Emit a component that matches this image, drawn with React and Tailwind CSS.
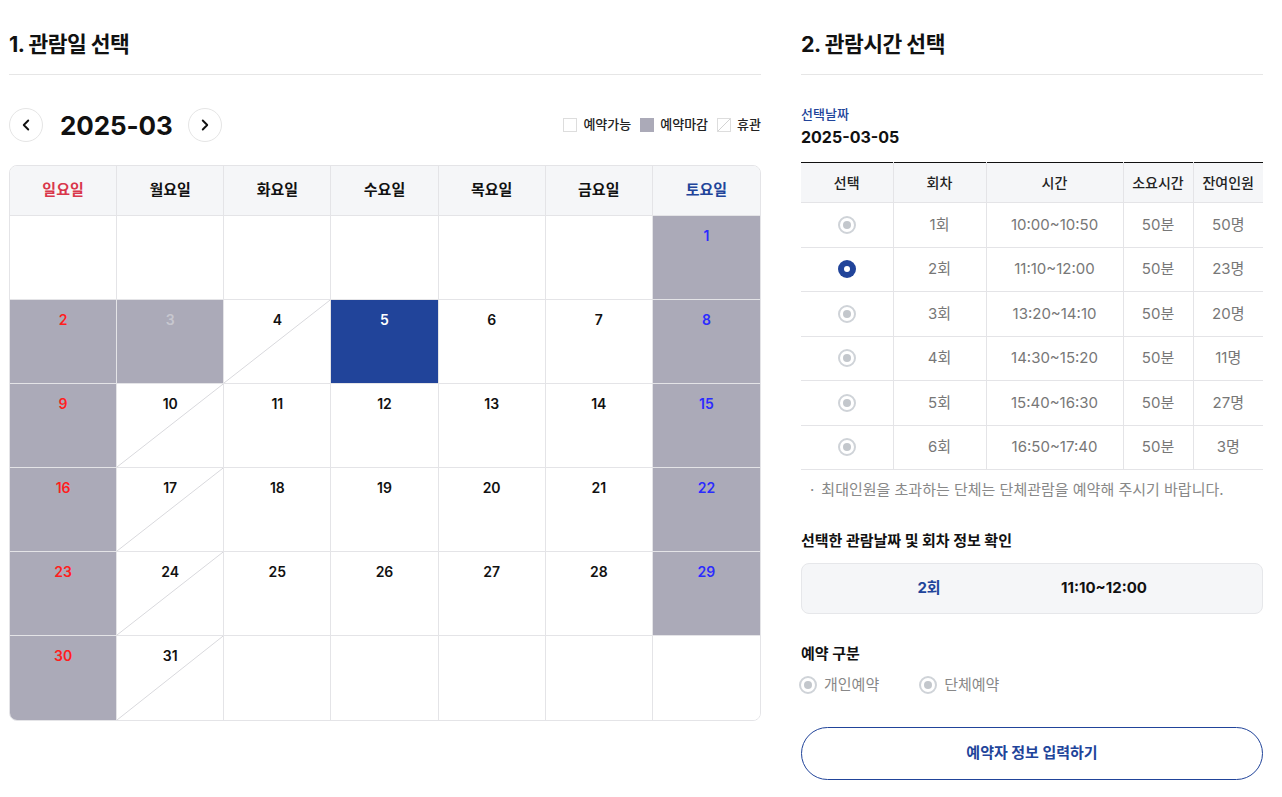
import { ChevronLeft, ChevronRight } from 'lucide-react'

const weeks = [
  [null, null, null, null, null, null, 1],
  [2, 3, 4, 5, 6, 7, 8],
  [9, 10, 11, 12, 13, 14, 15],
  [16, 17, 18, 19, 20, 21, 22],
  [23, 24, 25, 26, 27, 28, 29],
  [30, 31, null, null, null, null, null],
]

const holidays = [4, 10, 17, 24, 31]
const closed = [3]

const sessions = [
  { no: '1회', time: '10:00~10:50', dur: '50분', left: '50명' },
  { no: '2회', time: '11:10~12:00', dur: '50분', left: '23명', selected: true },
  { no: '3회', time: '13:20~14:10', dur: '50분', left: '20명' },
  { no: '4회', time: '14:30~15:20', dur: '50분', left: '11명' },
  { no: '5회', time: '15:40~16:30', dur: '50분', left: '27명' },
  { no: '6회', time: '16:50~17:40', dur: '50분', left: '3명' },
]

function Radio({ checked }) {
  if (checked) {
    return (
      <span className="w-[18px] h-[18px] rounded-full bg-[#21449a] flex items-center justify-center">
        <span className="w-[6px] h-[6px] rounded-full bg-white" />
      </span>
    )
  }
  return (
    <span className="w-[18px] h-[18px] rounded-full border-2 border-[#cfd3d8] flex items-center justify-center bg-white">
      <span className="w-[8px] h-[8px] rounded-full bg-[#c3c7cc]" />
    </span>
  )
}

function DayCell({ day, col, last }) {
  const isWeekend = col === 0 || col === 6
  const isHoliday = holidays.includes(day)
  const isSelected = day === 5
  const isClosed = day && (isWeekend || closed.includes(day))

  let bg = 'bg-white'
  if (isSelected) bg = 'bg-[#21449a]'
  else if (isClosed) bg = 'bg-[#abaab8]'

  let color = 'text-[#111]'
  if (isSelected) color = 'text-white'
  else if (closed.includes(day)) color = 'text-[#c7c7cf]'
  else if (col === 0) color = 'text-[#ff1e1e]'
  else if (col === 6) color = 'text-[#2b2bff]'

  return (
    <div
      className={`relative h-[84px] ${bg} ${col < 6 ? 'border-r border-r-[#e4e4e7]' : ''} ${last ? '' : 'border-b border-b-[#e4e4e7]'}`}
    >
      {isHoliday && (
        <svg className="absolute inset-0 w-full h-full" preserveAspectRatio="none" viewBox="0 0 100 100">
          <line x1="0" y1="100" x2="100" y2="0" stroke="#d9d9dd" strokeWidth="1" vectorEffect="non-scaling-stroke" />
        </svg>
      )}
      {day && (
        <div className={`relative pt-[9px] text-center text-[14px] font-semibold ${color}`}>{day}</div>
      )}
    </div>
  )
}

export default function App() {
  const days = ['일요일', '월요일', '화요일', '수요일', '목요일', '금요일', '토요일']
  return (
    <div
      className="w-[1282px] h-[797px] bg-white text-[#111] flex gap-[40px] pl-[9px] pr-[19px] overflow-hidden"
      style={{ fontFamily: 'Inter, "Noto Sans CJK KR", sans-serif' }}
    >
      {/* Left: calendar */}
      <div className="w-[752px] flex flex-col">
        <h2 className="pt-[30px] h-[75px] text-[21.5px] font-bold tracking-[-0.5px] border-b border-[#e6e6e6] leading-[28px]">
          1. 관람일 선택
        </h2>
        <div className="flex items-center justify-between mt-[33px] h-[34px]">
          <div className="flex items-center">
            <button className="w-[34px] h-[34px] rounded-full border border-[#e5e5e5] flex items-center justify-center">
              <ChevronLeft size={18} strokeWidth={2.5} />
            </button>
            <span className="ml-[17px] mr-[15px] text-[26px] font-bold tracking-[-0.1px]">2025-03</span>
            <button className="w-[34px] h-[34px] rounded-full border border-[#e5e5e5] flex items-center justify-center">
              <ChevronRight size={18} strokeWidth={2.5} />
            </button>
          </div>
          <div className="flex items-center gap-[9px] text-[13px] font-medium text-[#222]">
            <span className="flex items-center gap-[6px]">
              <span className="w-[14px] h-[14px] border border-[#ddd] bg-white" />
              예약가능
            </span>
            <span className="flex items-center gap-[6px]">
              <span className="w-[14px] h-[14px] bg-[#abaab8]" />
              예약마감
            </span>
            <span className="flex items-center gap-[6px]">
              <svg width="14" height="14" viewBox="0 0 14 14" className="border border-[#ddd]">
                <line x1="0" y1="14" x2="14" y2="0" stroke="#ccc" strokeWidth="1" />
              </svg>
              휴관
            </span>
          </div>
        </div>

        <div className="mt-[23px] border border-[#e4e4e7] rounded-[8px] overflow-hidden">
          <div className="grid grid-cols-7 bg-[#f5f6f8] border-b border-[#e4e4e7]">
            {days.map((d, i) => (
              <div
                key={d}
                className={`h-[49px] flex items-center justify-center text-[15px] font-semibold ${i < 6 ? 'border-r border-[#e4e4e7]' : ''} ${i === 0 ? 'text-[#d9374b]' : i === 6 ? 'text-[#21449a]' : 'text-[#111]'}`}
              >
                {d}
              </div>
            ))}
          </div>
          {weeks.map((w, wi) => (
            <div key={wi} className="grid grid-cols-7">
              {w.map((d, ci) => (
                <DayCell key={ci} day={d} col={ci} last={wi === weeks.length - 1} />
              ))}
            </div>
          ))}
        </div>
      </div>

      {/* Right: time selection */}
      <div className="w-[462px] flex flex-col">
        <h2 className="pt-[30px] h-[75px] text-[21.5px] font-bold tracking-[-0.5px] border-b border-[#e6e6e6] leading-[28px]">
          2. 관람시간 선택
        </h2>
        <div className="mt-[30px] text-[13px] font-medium text-[#21449a] leading-[18px]">선택날짜</div>
        <div className="mt-[3px] text-[16px] font-bold leading-[22px]">2025-03-05</div>

        <table className="mt-[14px] w-full border-collapse text-[15px] border-t border-t-[#111]">
          <thead>
            <tr className="bg-[#f5f6f8] h-[40px]">
              {['선택', '회차', '시간', '소요시간', '잔여인원'].map((h, i) => (
                <th
                  key={h}
                  className={`font-medium text-[14px] text-[#222] border-b border-[#e4e4e7] ${i < 4 ? 'border-r' : ''}`}
                  style={{ width: [92, 93, 137, 70, 70][i] }}
                >
                  {h}
                </th>
              ))}
            </tr>
          </thead>
          <tbody>
            {sessions.map((s) => (
              <tr key={s.no} className="h-[44.5px] text-[#777]">
                <td className="border-b border-r border-[#e4e4e7]">
                  <div className="flex justify-center">
                    <Radio checked={s.selected} />
                  </div>
                </td>
                <td className="text-center border-b border-r border-[#e4e4e7]">{s.no}</td>
                <td className="text-center border-b border-r border-[#e4e4e7]">{s.time}</td>
                <td className="text-center border-b border-r border-[#e4e4e7]">{s.dur}</td>
                <td className="text-center border-b border-[#e4e4e7]">{s.left}</td>
              </tr>
            ))}
          </tbody>
        </table>

        <p className="mt-[10px] pl-[9px] flex gap-[7px] text-[15px] text-[#888] leading-[20px]">
          <span>·</span>
          <span>최대인원을 초과하는 단체는 단체관람을 예약해 주시기 바랍니다.</span>
        </p>

        <div className="mt-[31px] text-[15px] font-bold leading-[20px]">선택한 관람날짜 및 회차 정보 확인</div>
        <div className="mt-[12px] h-[51px] bg-[#f5f6f8] border border-[#e6e7ea] rounded-[8px] grid grid-cols-[254px_96px] items-center text-[15px] font-bold">
          <span className="text-center text-[#21449a]">2회</span>
          <span className="text-center text-[#111]">11:10~12:00</span>
        </div>

        <div className="mt-[30px] text-[15px] font-bold leading-[20px]">예약 구분</div>
        <div className="mt-[10px] flex items-center gap-[40px] text-[15px] text-[#888] -ml-[2px]">
          <label className="flex items-center gap-[7px]">
            <Radio />
            개인예약
          </label>
          <label className="flex items-center gap-[7px]">
            <Radio />
            단체예약
          </label>
        </div>

        <button className="mt-[30px] h-[53px] w-full rounded-full border border-[#21449a] text-[15px] font-bold text-[#21449a] bg-white">
          예약자 정보 입력하기
        </button>
      </div>
    </div>
  )
}
